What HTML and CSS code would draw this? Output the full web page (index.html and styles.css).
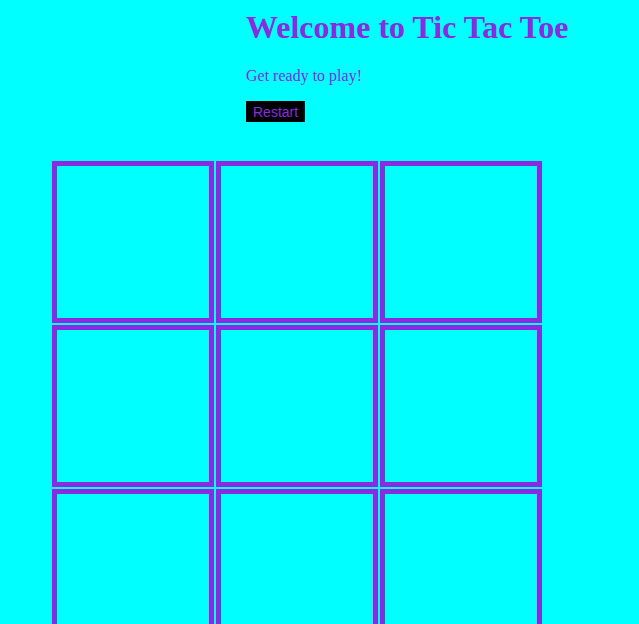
FILE: index.html
```html
<!DOCTYPE html>
<html>
<head>
<meta charset="utf-8">
<link rel="stylesheet" href="styles.css">
</head>
<body>
<header class="top">
  <h1 class="title">Welcome to Tic Tac Toe</h1>
  <p class="status">Get ready to play!</p>
  <button class="restart">Restart</button>
</header>
<main class="board">
  <div class="cell"></div><div class="cell"></div><div class="cell"></div>
  <div class="cell"></div><div class="cell"></div><div class="cell"></div>
  <div class="cell"></div><div class="cell"></div><div class="cell"></div>
</main>
</body>
</html>
```
FILE: styles.css
```css
html, body {
  background: #00ffff;
}
body {
  margin: 0;
  font-family: "Liberation Serif", "Times New Roman", serif;
  color: #8a2be2;
}
.top {
  padding: 9px 0 0 246px;
}
.title {
  margin: 0;
  font-size: 32px;
  line-height: 37px;
  font-weight: bold;
}
.status {
  margin: 21px 0 0;
  font-size: 16px;
  line-height: 18px;
}
.restart {
  margin-top: 16px;
  display: block;
  background: #000;
  color: #8a2be2;
  border: none;
  font-family: "Liberation Sans", Arial, sans-serif;
  font-size: 14px;
  height: 21px;
  padding: 0 7px;
}
.board {
  margin: 39px 0 0 52px;
  display: grid;
  grid-template-columns: repeat(3, 162px);
  grid-auto-rows: 162px;
  gap: 2px;
}
.cell {
  border: 5px solid #8a2be2;
}
```
